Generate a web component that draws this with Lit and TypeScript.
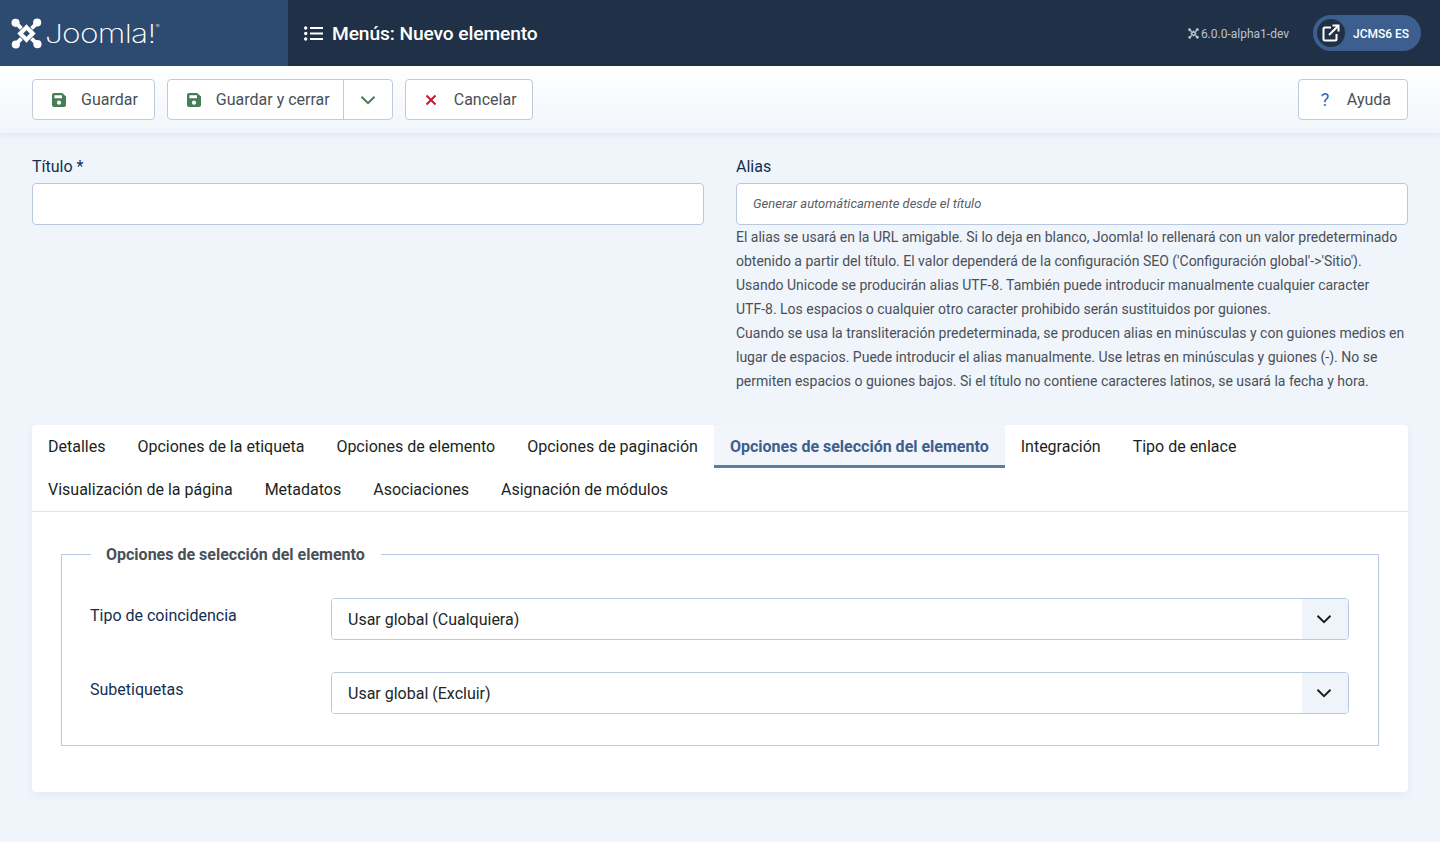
import { LitElement, html, css, svg } from 'lit';
import { customElement } from 'lit/decorators.js';

const chevron = html`<svg viewBox="0 0 16 16" width="16" height="16" fill="none" stroke="currentColor" stroke-width="2"><path d="M1.5 4.8 8 11.2l6.5-6.4"/></svg>`;
const floppy = html`<svg viewBox="0 0 14 14" width="14" height="14"><path fill="#457d54" fill-rule="evenodd" d="M2 0h8.2L14 3.6V12a2 2 0 0 1-2 2H2a2 2 0 0 1-2-2V2a2 2 0 0 1 2-2Zm.4 2.2v3h7.6v-3ZM7 7.6a2.1 2.1 0 1 0 0 4.2 2.1 2.1 0 0 0 0-4.2Z"/></svg>`;

const tabsRowOne = ['Detalles', 'Opciones de la etiqueta', 'Opciones de elemento', 'Opciones de paginación', 'Opciones de selección del elemento', 'Integración', 'Tipo de enlace'];
const tabsRowTwo = ['Visualización de la página', 'Metadatos', 'Asociaciones', 'Asignación de módulos'];
const activeTab = 'Opciones de selección del elemento';

// word joiner keeps UTF-8 on one line
const helpLines = [
  "El alias se usará en la URL amigable. Si lo deja en blanco, Joomla! lo rellenará con un valor predeterminado obtenido a partir del título. El valor dependerá de la configuración SEO ('Configuración global'->'Sitio'). Usando Unicode se producirán alias UTF-\u20608. También puede introducir manualmente cualquier caracter UTF-\u20608. Los espacios o cualquier otro caracter prohibido serán sustituidos por guiones.",
  'Cuando se usa la transliteración predeterminada, se producen alias en minúsculas y con guiones medios en lugar de espacios. Puede introducir el alias manualmente. Use letras en minúsculas y guiones (-). No se permiten espacios o guiones bajos. Si el título no contiene caracteres latinos, se usará la fecha y hora.',
];

// joomla mark, four arms with round ends woven round a small hollow centre
const joomlaMark = (size: number, color: string, cut: string) => html`
  <svg viewBox="0 0 32 32" width=${size} height=${size} fill="none">
    ${svg`
      <g stroke=${color} stroke-width="4.200">
        <path d="M5 5 13 13M27 5 19 13M27 27 19 19M5 27 13 19"/>
        <path d="M16 9.500 22.500 16 16 22.500 9.500 16Z"/>
      </g>
      <g stroke=${cut} stroke-width="1">
        <path d="M9.500 12.500 13.500 8.500M18.500 8.500 22.500 12.500M22.500 19.500 18.500 23.500M13.500 23.500 9.500 19.500"/>
      </g>
      <g fill=${color}>
        <circle cx="4.700" cy="5" r="4.200"/>
        <circle cx="27" cy="4.700" r="4.200"/>
        <circle cx="27.300" cy="27" r="4.200"/>
        <circle cx="5" cy="27.300" r="4.200"/>
      </g>
    `}
  </svg>`;

@customElement('app-root')
export class AppRoot extends LitElement {
  static styles = css`
    :host {
      display: block;
      min-height: 842px;
      background: #f0f4fb;
      font-family: Roboto, 'Liberation Sans', sans-serif;
      font-size: 16px;
      color: #22262a;
    }
    * { box-sizing: border-box; }

    .header {
      display: flex;
      align-items: center;
      height: 66px;
      background: #1f3047;
      color: #fff;
    }
    .brand {
      display: flex;
      align-items: center;
      gap: 3px;
      width: 288px;
      height: 100%;
      padding-left: 11px;
      background: #2d4a70;
    }
    .wordmark {
      display: flex;
      padding-top: 1px;
      font-family: Inter, sans-serif;
      font-weight: 200;
      font-size: 26px;
      letter-spacing: -0.6px;
      line-height: 1;
      transform: scaleX(1.22);
      transform-origin: left center;
    }
    .wordmark sup { font-size: 5px; line-height: 1; margin-top: 3px; }
    .page-title {
      display: flex;
      align-items: center;
      gap: 9px;
      margin: 0 0 0 16px;
      font-size: 19.2px;
      font-weight: 500;
      letter-spacing: -0.1px;
    }
    .header-right {
      margin-left: auto;
      display: flex;
      align-items: center;
      gap: 24px;
      padding-right: 19px;
    }
    .version {
      display: flex;
      align-items: center;
      gap: 2px;
      padding-top: 1px;
      font-size: 12px;
      color: #bcc3cd;
    }
    .site-pill {
      display: flex;
      align-items: center;
      gap: 8px;
      height: 36px;
      width: 108px;
      padding-left: 4px;
      border-radius: 18px;
      background: #3d5f8f;
      font-size: 12px;
      font-weight: 500;
    }
    .site-label { padding-top: 1px; }
    .site-icon {
      display: flex;
      align-items: center;
      justify-content: center;
      width: 28px;
      height: 28px;
      border-radius: 50%;
      background: #1f3047;
    }

    .toolbar {
      display: flex;
      align-items: center;
      gap: 12px;
      height: 67px;
      padding: 0 32px;
      background: linear-gradient(#fff, #f1f5fb);
      box-shadow: 0 2px 6px rgba(30, 60, 110, 0.07);
    }
    .btn {
      display: flex;
      align-items: center;
      height: 41px;
      background: #fff;
      border: 1px solid #c1cbd9;
      border-radius: 4px;
      color: #495057;
      font-size: 16px;
    }
    .btn-part {
      display: flex;
      align-items: center;
      gap: 15px;
      height: 100%;
      padding: 0 16px 0 19px;
    }
    .btn-part.joined { padding-right: 13px; }
    .btn-toggle {
      display: flex;
      align-items: center;
      justify-content: center;
      width: 49px;
      height: 100%;
      border-left: 1px solid #c1cbd9;
      color: #457d54;
    }
    .cancel { gap: 17px; padding: 0 15px 0 19px; }
    .help { margin-left: auto; gap: 16px; padding: 0 16px 0 22px; }
    .help-mark { color: #2a69b8; font-size: 18px; font-weight: 400; width: 10px; }

    .form-top {
      display: grid;
      grid-template-columns: 1fr 1fr;
      column-gap: 32px;
      padding: 22px 32px 0;
      height: 292px;
    }
    .form-top label {
      display: block;
      height: 28px;
      line-height: 24px;
      color: #132f53;
    }
    .text-input {
      display: block;
      width: 100%;
      height: 42px;
      padding: 0 16px 3px;
      background: #fff;
      border: 1px solid #b9c8df;
      border-radius: 4px;
      font: inherit;
    }
    .text-input::placeholder {
      font-size: 13px;
      font-style: italic;
      color: #5a6067;
      opacity: 1;
    }
    .help-text {
      margin: 0;
      font-size: 14px;
      line-height: 24px;
      color: #495057;
    }
    .help-text p { margin: 0; }

    .card {
      margin: 0 32px;
      height: 367px;
      background: #fff;
      border-radius: 4px;
      box-shadow: 0 4px 8px rgba(30, 60, 110, 0.05);
    }
    .tabs {
      height: 87px;
      border-bottom: 1px solid #dfe5ee;
    }
    .tab-row { display: flex; height: 43px; }
    .tab {
      display: flex;
      align-items: center;
      height: 43px;
      padding: 0 16px;
      color: #1c1f22;
    }
    .tab.active {
      background: #f2f5f9;
      border-bottom: 3px solid #5d7ba3;
      padding-top: 3px;
      color: #3d5f8f;
      font-weight: 700;
    }
    .panel { padding: 31px 29px 0; }
    fieldset {
      margin: 0;
      height: 203px;
      padding: 33px 29px 0 28px;
      border: 1px solid #b9c8df;
      min-width: 0;
    }
    legend {
      margin-left: 1px;
      padding: 2px 16px 0 15px;
      font-size: 16px;
      font-weight: 700;
      color: #495057;
      line-height: 20px;
    }
    .field {
      display: flex;
      margin-bottom: 32px;
    }
    .field label {
      width: 241px;
      flex: none;
      line-height: 36px;
      color: #132f53;
    }
    .select {
      display: flex;
      flex: 1;
      height: 42px;
      border: 1px solid #b9c8df;
      border-radius: 4px;
      overflow: hidden;
    }
    .select select {
      flex: 1;
      appearance: none;
      border: 0;
      padding: 0 16px;
      background: #fff;
      font: inherit;
      color: #22262a;
    }
    .select-arrow {
      display: flex;
      align-items: center;
      justify-content: center;
      width: 46px;
      padding-right: 2px;
      background: #eff4fb;
      color: #1c1f22;
    }
  `;

  private renderTab(name: string) {
    return html`<div class="tab ${name === activeTab ? 'active' : ''}">${name}</div>`;
  }

  private renderSelect(label: string, value: string) {
    return html`
      <div class="field">
        <label>${label}</label>
        <div class="select">
          <select><option>${value}</option></select>
          <div class="select-arrow">${chevron}</div>
        </div>
      </div>`;
  }

  render() {
    return html`
      <header class="header">
        <div class="brand">
          ${joomlaMark(31, '#fff', '#2d4a70')}
          <span class="wordmark">Joomla<span>!</span><sup>®</sup></span>
        </div>
        <h1 class="page-title">
          <svg viewBox="0 0 19 15" width="19" height="15" fill="#fff">
            <circle cx="1.700" cy="2" r="1.700"/><circle cx="1.700" cy="7.500" r="1.700"/><circle cx="1.700" cy="13" r="1.700"/>
            <rect x="6" y="1" width="13" height="2"/><rect x="6" y="6.500" width="13" height="2"/><rect x="6" y="12" width="13" height="2"/>
          </svg>
          Menús: Nuevo elemento
        </h1>
        <div class="header-right">
          <div class="version">${joomlaMark(11, '#bcc3cd', '#1f3047')} 6.0.0-alpha1-dev</div>
          <div class="site-pill">
            <span class="site-icon">
              <svg viewBox="0 0 18 18" width="18" height="18" fill="none" stroke="#fff" stroke-width="2">
                <path d="M9 3.500H3a1.500 1.500 0 0 0-1.500 1.500v10A1.500 1.500 0 0 0 3 16.500h10a1.500 1.500 0 0 0 1.500-1.500V10"/>
                <path d="M7 11 16 2M10.500 1.500h6v6"/>
              </svg>
            </span>
            <span class="site-label">JCMS6 ES</span>
          </div>
        </div>
      </header>

      <div class="toolbar">
        <div class="btn"><span class="btn-part">${floppy} Guardar</span></div>
        <div class="btn">
          <span class="btn-part joined">${floppy} Guardar y cerrar</span>
          <span class="btn-toggle">${chevron}</span>
        </div>
        <div class="btn cancel">
          <svg viewBox="0 0 12 12" width="12" height="12" fill="none" stroke="#d0142c" stroke-width="2"><path d="M1.500 1.500l9 9M10.500 1.500l-9 9"/></svg>
          Cancelar
        </div>
        <div class="btn help"><span class="help-mark">?</span> Ayuda</div>
      </div>

      <div class="form-top">
        <div>
          <label>Título *</label>
          <input class="text-input" type="text" />
        </div>
        <div>
          <label>Alias</label>
          <input class="text-input" type="text" placeholder="Generar automáticamente desde el título" />
          <div class="help-text">${helpLines.map((line) => html`<p>${line}</p>`)}</div>
        </div>
      </div>

      <section class="card">
        <div class="tabs">
          <div class="tab-row">${tabsRowOne.map((t) => this.renderTab(t))}</div>
          <div class="tab-row">${tabsRowTwo.map((t) => this.renderTab(t))}</div>
        </div>
        <div class="panel">
          <fieldset>
            <legend>Opciones de selección del elemento</legend>
            ${this.renderSelect('Tipo de coincidencia', 'Usar global (Cualquiera)')}
            ${this.renderSelect('Subetiquetas', 'Usar global (Excluir)')}
          </fieldset>
        </div>
      </section>
    `;
  }
}
